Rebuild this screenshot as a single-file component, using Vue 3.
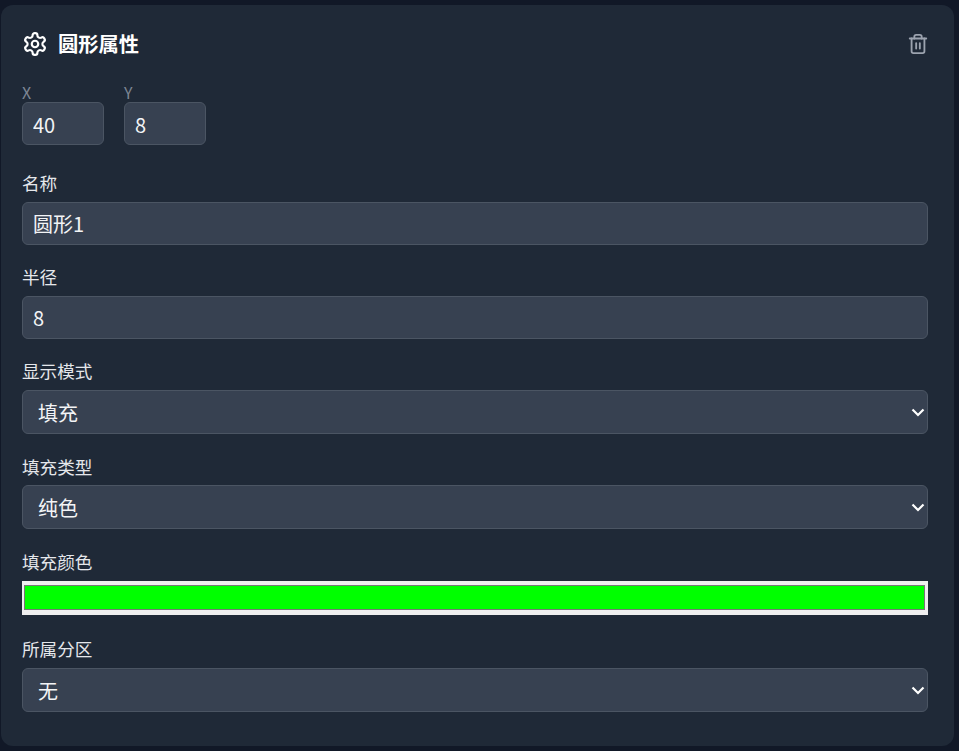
<template>
  <div class="page">
    <div class="card">
      <div class="head">
        <div class="title">
          <svg class="gear" viewBox="0 0 24 24" fill="none" stroke="currentColor" stroke-width="2" stroke-linecap="round" stroke-linejoin="round">
            <path d="M12.22 2h-.44a2 2 0 0 0-2 2v.18a2 2 0 0 1-1 1.73l-.43.25a2 2 0 0 1-2 0l-.15-.08a2 2 0 0 0-2.73.73l-.22.38a2 2 0 0 0 .73 2.73l.15.1a2 2 0 0 1 1 1.72v.51a2 2 0 0 1-1 1.74l-.15.09a2 2 0 0 0-.73 2.73l.22.38a2 2 0 0 0 2.73.73l.15-.08a2 2 0 0 1 2 0l.43.25a2 2 0 0 1 1 1.73V20a2 2 0 0 0 2 2h.44a2 2 0 0 0 2-2v-.18a2 2 0 0 1 1-1.73l.43-.25a2 2 0 0 1 2 0l.15.08a2 2 0 0 0 2.73-.73l.22-.39a2 2 0 0 0-.73-2.73l-.15-.08a2 2 0 0 1-1-1.74v-.5a2 2 0 0 1 1-1.74l.15-.09a2 2 0 0 0 .73-2.73l-.22-.38a2 2 0 0 0-2.73-.73l-.15.08a2 2 0 0 1-2 0l-.43-.25a2 2 0 0 1-1-1.73V4a2 2 0 0 0-2-2z" />
            <circle cx="12" cy="12" r="3" />
          </svg>
          <h2>{{ name }}属性</h2>
        </div>
        <button class="trash" title="删除">
          <svg viewBox="0 0 24 24" fill="none" stroke="currentColor" stroke-width="2" stroke-linecap="round" stroke-linejoin="round">
            <path d="M3 6h18" />
            <path d="M19 6v14a2 2 0 0 1-2 2H7a2 2 0 0 1-2-2V6" />
            <path d="M8 6V4a2 2 0 0 1 2-2h4a2 2 0 0 1 2 2v2" />
            <path d="M10 11v6" />
            <path d="M14 11v6" />
          </svg>
        </button>
      </div>

      <div class="pos">
        <div>
          <label class="small">X</label>
          <input v-model="x" class="input" />
        </div>
        <div>
          <label class="small">Y</label>
          <input v-model="y" class="input" />
        </div>
      </div>

      <div class="field first">
        <label>名称</label>
        <input v-model="title" class="input" />
      </div>
      <div class="field">
        <label>半径</label>
        <input v-model="radius" class="input" />
      </div>
      <div class="field">
        <label>显示模式</label>
        <select class="select"><option>填充</option></select>
      </div>
      <div class="field">
        <label class="down">填充类型</label>
        <select class="select"><option>纯色</option></select>
      </div>
      <div class="field colorField">
        <label>填充颜色</label>
        <input type="color" v-model="color" class="color" />
      </div>
      <div class="field last">
        <label>所属分区</label>
        <select class="select"><option>无</option></select>
      </div>
    </div>
  </div>
</template>

<script setup>
import { ref } from "vue";

const name = ref("圆形");
const x = ref("40");
const y = ref("8");
const title = ref("圆形1");
const radius = ref("8");
const color = ref("#00ff00");
</script>

<style scoped>
.page{height:751px;box-sizing:border-box;padding:5px 5px 5px 1px;background:#111827;font-family:"Noto Sans CJK SC","Noto Sans",sans-serif;color:#e5e7eb;overflow:hidden}
.card{height:741px;box-sizing:border-box;padding:21px 26px 0 21px;background:#1f2937;border-radius:12px}
.head{display:flex;justify-content:space-between;align-items:center;height:36px}
.title{display:flex;align-items:center;gap:10px}
.gear{width:26px;height:26px;color:#fff}
.title h2{margin:0;font-size:20.25px;font-weight:700;color:#fff;line-height:36px}
.trash{width:22px;height:22px;padding:0;margin-right:-1px;border:0;background:transparent;color:#9ca3af}
.trash svg{width:22px;height:22px;display:block}
.pos{display:flex;gap:20px;margin-top:20px}
.pos>div{width:82px}
.pos .input{padding-top:2px}
.small{display:block;height:20px;line-height:20px;font-size:16px;color:#7d8694}
.field{margin-top:19px}
.field.first{margin-top:25px}
.field.colorField{margin-top:20px}
.field.last{margin-top:21px}
.field label{display:block;height:25px;line-height:25px;margin-bottom:7px;font-size:17.6px;color:#e5e7eb}
.field label.down{line-height:27px}
.input{display:block;width:100%;height:43px;box-sizing:border-box;padding:0 10px;border:1px solid #4b5563;border-radius:6px;background:#374151;color:#f3f4f6;font:20px "Noto Sans CJK SC","Noto Sans",sans-serif;outline:none}
.select{display:block;width:100%;height:44px;box-sizing:border-box;padding:0 15px;border:1px solid #4b5563;border-radius:6px;appearance:none;background-color:#374151;background-image:url("data:image/svg+xml,%3Csvg xmlns='http://www.w3.org/2000/svg' viewBox='0 0 14 9'%3E%3Cpath d='M1.5 1.5 7 7l5.5-5.5' fill='none' stroke='%23fff' stroke-width='2.2'/%3E%3C/svg%3E");background-repeat:no-repeat;background-position:right 2px center;background-size:14px 9px;color:#f3f4f6;font:20px "Noto Sans CJK SC","Noto Sans",sans-serif;outline:none}
.color{display:block;width:100%;height:34px;box-sizing:border-box;padding:0;border:0;background:#efefef}
.color::-webkit-color-swatch-wrapper{padding:4px 3px 5px 2px}
.color::-webkit-color-swatch{border:1px solid #777}
</style>

<style>
body{margin:0;background:#111827}
</style>
